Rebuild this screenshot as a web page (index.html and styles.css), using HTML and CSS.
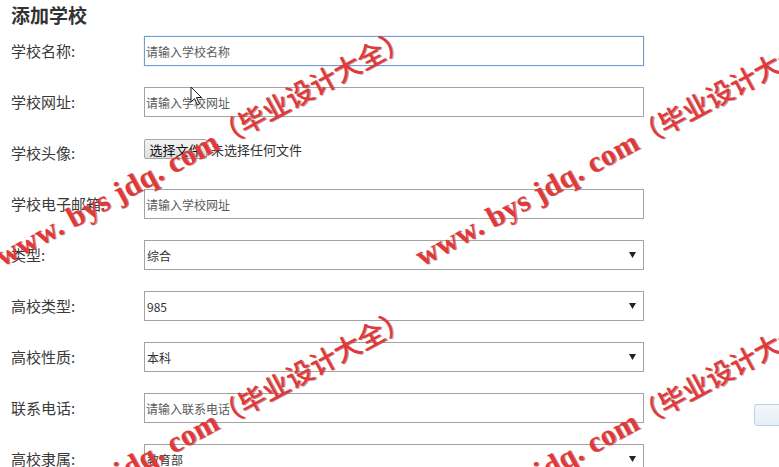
FILE: index.html
```html
<!DOCTYPE html>
<html lang="zh-CN">
<head>
<meta charset="utf-8">
<title>添加学校</title>
<link rel="stylesheet" href="styles.css">
</head>
<body>
<div class="page">
  <main class="main">
    <h1 class="title">添加学校</h1>
    <form class="form">
      <div class="row">
        <label class="label">学校名称:</label>
        <input class="field focused" type="text" placeholder="请输入学校名称">
      </div>
      <div class="row">
        <label class="label">学校网址:</label>
        <input class="field" type="text" placeholder="请输入学校网址">
      </div>
      <div class="row">
        <label class="label">学校头像:</label>
        <div class="file">
          <span class="file-btn">选择文件</span>
          <span class="file-text">未选择任何文件</span>
        </div>
      </div>
      <div class="row">
        <label class="label">学校电子邮箱:</label>
        <input class="field" type="text" placeholder="请输入学校网址">
      </div>
      <div class="row">
        <label class="label">类型:</label>
        <select class="field select"><option>综合</option></select>
      </div>
      <div class="row">
        <label class="label">高校类型:</label>
        <select class="field select"><option>985</option></select>
      </div>
      <div class="row">
        <label class="label">高校性质:</label>
        <select class="field select"><option>本科</option></select>
      </div>
      <div class="row">
        <label class="label">联系电话:</label>
        <input class="field" type="text" placeholder="请输入联系电话">
      </div>
      <div class="row">
        <label class="label">高校隶属:</label>
        <select class="field select"><option>教育部</option></select>
      </div>
    </form>
  </main>
  <aside class="side">
    <button class="side-btn" type="button"></button>
  </aside>
</div>

<svg class="cursor" width="14" height="20" viewBox="0 0 14 20" aria-hidden="true">
  <path d="M1 1 L1 16 L4.5 12.5 L7.5 19 L9.5 18 L6.5 11.5 L11.5 11.5 Z" fill="#fff" stroke="#222" stroke-width="1" stroke-linejoin="round"/>
</svg>

<div class="watermarks" aria-hidden="true">
  <span class="wm wm1"><span class="wm-lat">www. bys jdq. com</span><span class="wm-cjk">（毕业设计大全）</span></span>
  <span class="wm wm2"><span class="wm-lat">www. bys jdq. com</span><span class="wm-cjk">（毕业设计大全）</span></span>
  <span class="wm wm3"><span class="wm-lat">www. bys jdq. com</span><span class="wm-cjk">（毕业设计大全）</span></span>
  <span class="wm wm4"><span class="wm-lat">www. bys jdq. com</span><span class="wm-cjk">（毕业设计大全）</span></span>
</div>
</body>
</html>
```

FILE: styles.css
```css
html, body {
  margin: 0;
  padding: 0;
  background: #ffffff;
  overflow: hidden;
}

body {
  width: 779px;
  height: 467px;
  position: relative;
  font-family: "Noto Sans CJK SC", "Noto Sans", sans-serif;
  color: #333333;
}

.page {
  display: flex;
  align-items: flex-start;
}

.main {
  width: 633px;
  padding: 4px 0 0 11px;
  flex: none;
}

.title {
  margin: 0;
  font-size: 19px;
  line-height: 22px;
  font-weight: 700;
  color: #333333;
}

.form {
  margin-top: 10px;
  display: flex;
  flex-direction: column;
  gap: 21px;
}

.row {
  display: flex;
  align-items: center;
  height: 30px;
}

.label {
  width: 133px;
  flex: none;
  font-size: 15px;
  line-height: 20px;
  color: #3a3a3a;
  white-space: nowrap;
}

.field {
  box-sizing: border-box;
  width: 500px;
  height: 30px;
  margin: 0;
  padding: 0 1px;
  border: 1px solid #a3a3a3;
  border-radius: 0;
  background: #ffffff;
  font-family: "Noto Sans CJK SC", "Noto Sans", sans-serif;
  font-size: 12px;
  color: #333333;
  outline: none;
}

.field::placeholder {
  color: #5a5a5a;
}

.focused {
  border-color: #6f9fd0;
  box-shadow: 0 0 1px rgba(90, 140, 200, 0.6);
}

.select {
  -webkit-appearance: none;
  appearance: none;
  padding-left: 2px;
  background-image: url("data:image/svg+xml;utf8,<svg xmlns='http://www.w3.org/2000/svg' width='7' height='6'><path d='M0 0 L7 0 L3.5 6 Z' fill='%23222'/></svg>");
  background-repeat: no-repeat;
  background-position: right 7px center;
}

.file {
  align-self: flex-start;
  margin-top: 1px;
  display: flex;
  align-items: center;
  gap: 4px;
  font-size: 13px;
}

.file-btn {
  box-sizing: border-box;
  height: 20px;
  width: 63px;
  display: flex;
  align-items: center;
  justify-content: center;
  border: 1px solid #a5a5a5;
  border-radius: 2px;
  background: linear-gradient(#f4f4f4, #dedede);
  color: #111111;
  font-size: 13px;
}

.file-text {
  color: #333333;
  font-size: 13px;
}

.side {
  flex: none;
  padding-left: 110px;
}

.side-btn {
  margin-top: 404px;
  width: 40px;
  height: 22px;
  border: 1px solid #bfd0e2;
  border-radius: 3px;
  background: linear-gradient(#f3f7fb, #e6eef6);
  padding: 0;
}

.cursor {
  position: absolute;
  left: 190px;
  top: 86px;
}

.watermarks {
  position: absolute;
  inset: 0;
  pointer-events: none;
  overflow: hidden;
}

.wm {
  position: absolute;
  white-space: nowrap;
  line-height: 30px;
  color: #e0393a;
  text-shadow: 1px 1px 0 rgba(150, 25, 25, 0.5);
  transform-origin: 0 100%;
  transform: rotate(-28.5deg);
}

.wm-lat {
  font-family: "Liberation Serif", serif;
  font-size: 30px;
  font-weight: 700;
  letter-spacing: 0.5px;
}

.wm-cjk {
  font-family: "Noto Sans CJK SC", sans-serif;
  font-size: 27px;
  font-weight: 500;
  letter-spacing: 0;
}

.wm1 { left: 6px;   top: 240px; }
.wm2 { left: 426px; top: 240px; }
.wm3 { left: 6px;   top: 520px; }
.wm4 { left: 426px; top: 520px; }
```
